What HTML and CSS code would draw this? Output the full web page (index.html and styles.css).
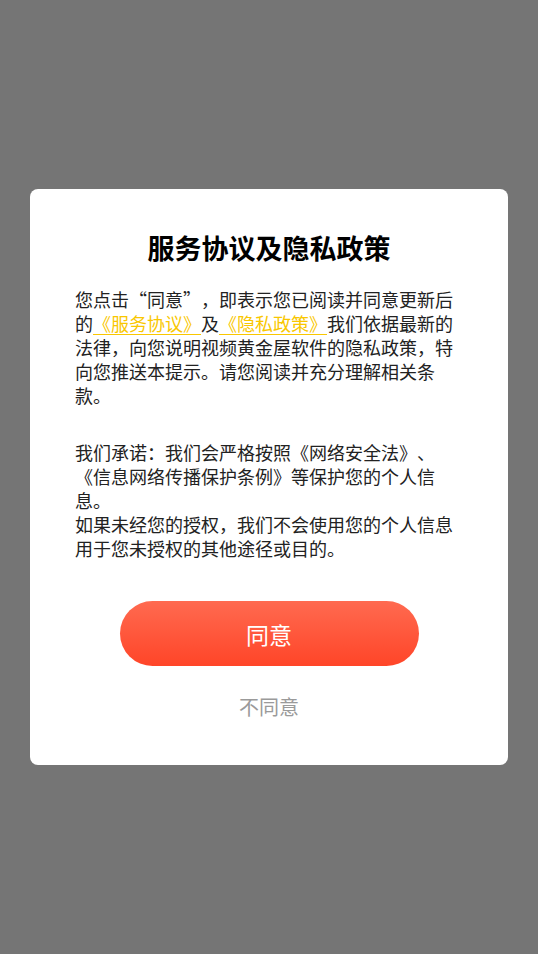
FILE: index.html
```html
<!DOCTYPE html>
<html lang="zh-CN">
<head>
<meta charset="utf-8">
<link rel="stylesheet" href="styles.css">
</head>
<body>
<div class="overlay">
  <div class="dialog">
    <h1 class="title">服务协议及隐私政策</h1>
    <p class="para">您点击“同意”，即表示您已阅读并同意更新后的<a class="link">《服务协议》</a>及<a class="link">《隐私政策》</a>我们依据最新的法律，向您说明视频黄金屋软件的隐私政策，特向您推送本提示。请您阅读并充分理解相关条款。</p>
    <p class="para para-second">我们承诺：我们会严格按照《网络安全法》、《信息网络传播保护条例》等保护您的个人信息。<br>如果未经您的授权，我们不会使用您的个人信息用于您未授权的其他途径或目的。</p>
    <div class="actions">
      <button class="btn-agree">同意</button>
      <button class="btn-disagree">不同意</button>
    </div>
  </div>
</div>
</body>
</html>
```
FILE: styles.css
```css
html, body {
  margin: 0;
  padding: 0;
}
body {
  width: 538px;
  height: 954px;
  background: #757575;
  font-family: "Noto Sans CJK SC", "Noto Sans", sans-serif;
  text-spacing-trim: space-all;
}
.overlay {
  padding: 189px 30px 0 30px;
}
.dialog {
  background: #ffffff;
  border-radius: 8px;
  padding: 41px 45px 44px 45px;
  box-sizing: border-box;
  width: 478px;
  height: 576px;
}
.title {
  margin: 0;
  font-size: 27px;
  line-height: 36px;
  font-weight: bold;
  color: #000;
  text-align: center;
}
.para {
  margin: 21px 0 0 0;
  font-size: 18px;
  line-height: 24px;
  color: #222;
  letter-spacing: 0;
  text-spacing-trim: space-all;
  line-break: strict;
}
.para-second {
  margin-top: 33px;
}
.link {
  color: #f9c700;
  text-decoration: underline;
  text-underline-offset: 3px;
}
.actions {
  display: flex;
  flex-direction: column;
  align-items: center;
  margin-top: 41px;
}
.btn-agree {
  width: 299px;
  height: 65px;
  border: none;
  border-radius: 33px;
  background: linear-gradient(180deg, #ff6a50 0%, #ff4528 100%);
  color: #fff;
  font-family: inherit;
  font-size: 23px;
  padding: 0;
}
.btn-disagree {
  margin-top: 27px;
  border: none;
  background: none;
  padding: 0;
  color: #9a9a9a;
  font-family: inherit;
  font-size: 20px;
  line-height: 28px;
}
```
